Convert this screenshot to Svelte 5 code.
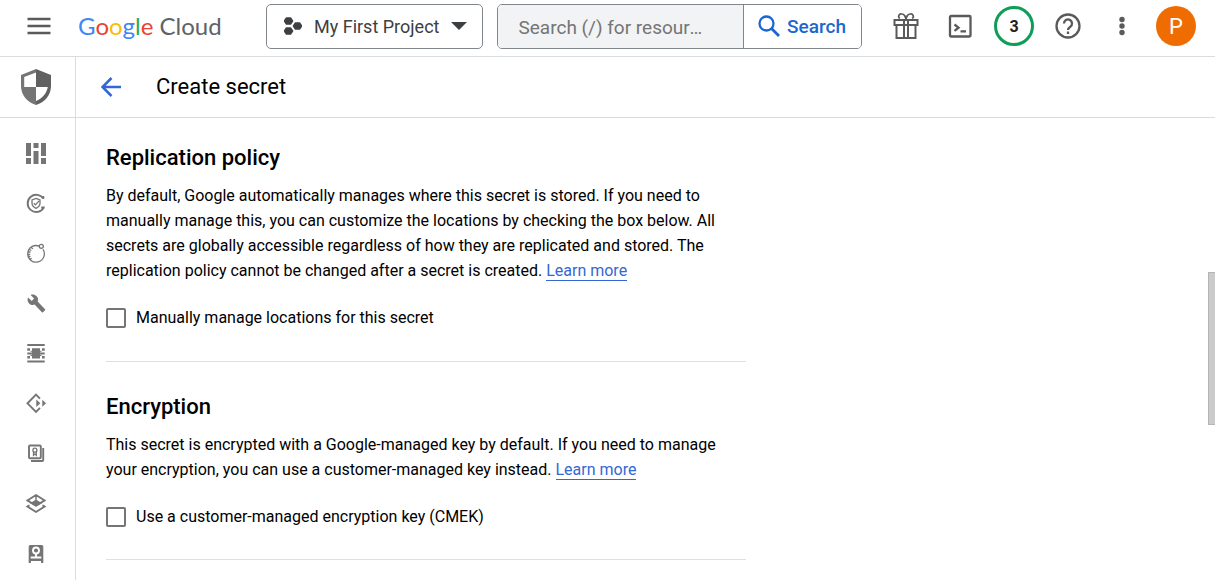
<script lang="ts">
  interface NavItem {
    label: string;
    fill?: string;
    line?: string;
    thin?: string;
    knockout?: string;
  }

  const navItems: NavItem[] = [
    {
      label: 'Risk overview',
      fill: 'M2 2h5v13H2zM2 17h5v6H2zM9.500 2h5v5h-5zM9.500 10h5v13h-5zM17 2h5v13h-5zM17 17h5v6h-5z',
    },
    {
      label: 'Compliance',
      line: 'M19.300 7.400A8.600 8.600 0 1 0 19.400 17.200M19.300 8V5M17.200 16.500h3.500',
      thin: 'M12 7.400l4 1.600v3c0 2.500-1.600 4.300-4 5.300-2.400-1-4-2.800-4-5.300V9zM9.800 12.200l1.700 1.700 3.500-4',
    },
    {
      label: 'Zero Trust',
      thin: 'M15.500 5.300A8.300 8.300 0 1 0 19 8.300M19.300 5.300a2 2 0 1 1-4 0 2 2 0 0 1 4 0zM7 6.500l2 1.200M5.300 8.500l2 1M4 11h2.500M3.700 13.500h2.500M4.500 16l2-.6M6 18.500l1.600-1.300',
    },
    {
      label: 'Detection tools',
      fill: 'M21 18.200l-7.300-7.600c.7-2 .3-4.100-1.200-5.600-1.600-1.600-4-2-5.900-1.100l3.500 3.600-2.400 2.400-3.600-3.400c-1 1.900-.6 4.300 1 5.900 1.500 1.500 3.700 1.900 5.500 1.200l7.300 7.600c.3.3.8.3 1.100 0l2-2c.4-.3.4-.8 0-1z',
    },
    {
      label: 'Network protection',
      fill: 'M3.300 3h17.400v2H3.300zM3.300 19.500h17.400v2H3.300zM8 7.300h8v10.200H8zM3.300 11.400h17.400v2H3.300zM3.300 7.300H6v2.400H3.300zM18 7.300h2.700v2.400H18zM3.300 15.100H6v2.400H3.300zM18 15.100h2.700v2.400H18zM6.500 9.700h11v1H6.500zM6.500 14.100h11v1h-11z',
    },
    {
      label: 'Web Security',
      fill: 'M12.300 8.500l4 3.800-4 3.800zM18.300 8.800l3.700 3.500-3.700 3.500z',
      line: 'M16 7.700L12 3.700l-8.500 8.600 8.500 8.600 4-4',
    },
    {
      label: 'Certificates',
      line: 'M6 4.500h9.800a1 1 0 0 1 1 1v10.700a1 1 0 0 1-1 1H6a1 1 0 0 1-1-1V5.500a1 1 0 0 1 1-1zM19.200 7V19a1 1 0 0 1-1 1H7',
      thin: 'M12.900 9.200a2 2 0 1 1-4 0 2 2 0 0 1 4 0zM9.500 11v3.300l1.400-1.200 1.400 1.200V11',
    },
    {
      label: 'Policy layers',
      fill: 'M11.300 4h1.400v5l5.300 3.200-6 3.300-6-3.300L11.300 9z',
      line: 'M12 4l8.600 5.400-8.600 5.300-8.600-5.300zM5.500 14.300l-2.100 1.300L12 21l8.600-5.400-2.100-1.300',
    },
    {
      label: 'Key vault',
      fill: 'M6.200 4h11.600a1.500 1.500 0 0 1 1.500 1.500V22h-2.200v-2H6.900v2H4.700V5.500A1.500 1.500 0 0 1 6.200 4z',
      knockout: 'M15 9.500a3 3 0 1 1-6 0 3 3 0 0 1 6 0zM12 12.500v3.700M6.700 16.500h10.600',
    },
  ];

  let query = $state('');
  let manualLocations = $state(false);
  let useCmek = $state(false);
</script>

<header class="topbar">
  <button type="button" class="icon-btn menu" aria-label="Navigation menu">
    <svg width="24" height="24" viewBox="0 0 24 24" fill="none" stroke="currentColor" stroke-width="2.400">
      <path d="M.5 5h23M.5 12h23M.5 19h23" />
    </svg>
  </button>

  <a href="#home" class="logo"><span class="blue">G</span><span class="red">o</span><span class="yellow">o</span><span class="blue">g</span><span class="green">l</span><span class="red">e</span> Cloud</a>

  <button type="button" class="project">
    <svg width="18" height="20" viewBox="0 0 18 20" fill="currentColor">
      <path d="M2.500 2h4l2 3-2 3h-4l-2-3zM11.500 7h4l2 3-2 3h-4l-2-3zM2.500 12h4l2 3-2 3h-4l-2-3z" stroke="currentColor" stroke-width="1.600" stroke-linejoin="round" />
    </svg>
    <span>My First Project</span>
    <svg width="16" height="8" viewBox="0 0 16 8" fill="currentColor">
      <path d="M0 0h16L8 8z" />
    </svg>
  </button>

  <form class="search" onsubmit={(e) => e.preventDefault()}>
    <input
      type="text"
      bind:value={query}
      placeholder="Search (/) for resources, docs, products, and more"
      aria-label="Search"
    />
    <button type="submit">
      <svg width="24" height="24" viewBox="0 0 24 24" fill="none" stroke="currentColor" stroke-width="2.300">
        <circle cx="9.500" cy="9.500" r="7" />
        <path d="M14.500 14.500l7.500 7.500" stroke-width="2.800" />
      </svg>
      Search
    </button>
  </form>

  <div class="tools">
    <button type="button" class="icon-btn" aria-label="Free trial">
      <svg width="28" height="28" viewBox="0 0 28 28" fill="none" stroke="currentColor" stroke-width="2">
        <path d="M2.500 8h23v5h-23zM4.500 13h19v13h-19zM12 8v18M16 8v18" />
        <path d="M14 7c-1-3.500-2.500-5-4.200-5a2.500 2.500 0 0 0-2 4.500M14 7c1-3.500 2.500-5 4.200-5a2.500 2.500 0 0 1 2 4.500M11.500 2.500L14 5l2.500-2.500" stroke-width="1.700" />
      </svg>
    </button>
    <button type="button" class="icon-btn" aria-label="Activate Cloud Shell">
      <svg width="24" height="24" viewBox="0 0 24 24" fill="none" stroke="currentColor" stroke-width="2.300">
        <rect x="2" y="2" width="20.500" height="20.500" rx="1" />
        <path d="M6.500 10.500l4 3.200-4 3.200M12.500 17.300h5.500" />
      </svg>
    </button>
    <button type="button" class="badge" aria-label="3 notifications">3</button>
    <button type="button" class="icon-btn" aria-label="Help">
      <svg width="26" height="26" viewBox="0 0 26 26" fill="none" stroke="currentColor" stroke-width="2.300">
        <circle cx="13" cy="13" r="11.500" />
        <path d="M9 10.500a4 4 0 1 1 6.300 3.200c-1.500 1.100-2.300 1.700-2.300 3.300M13 18.500v2.500" />
      </svg>
    </button>
    <button type="button" class="icon-btn" aria-label="More options">
      <svg width="24" height="24" viewBox="0 0 24 24" fill="currentColor">
        <circle cx="12" cy="5.500" r="2.700" />
        <circle cx="12" cy="12" r="2.700" />
        <circle cx="12" cy="18.500" r="2.700" />
      </svg>
    </button>
    <button type="button" class="avatar" aria-label="Account">P</button>
  </div>
</header>

<div class="layout">
  <nav class="sidebar" aria-label="Security">
    <a href="#security" class="product" aria-label="Security">
      <svg width="32" height="38" viewBox="0 0 32 38">
        <path fill="#757575" d="M16 1L1 7v11c0 9 6.300 16.500 15 19z" />
        <path fill="#616161" d="M16 1l15 6v11c0 9-6.300 16.500-15 19z" />
        <path fill="#fff" d="M4.200 9L16 4.500V19H4.200zM16 19h11.800c-1.100 6.500-5.800 11.500-11.800 14z" />
      </svg>
    </a>
    <ul>
      {#each navItems as item}
        <li>
          <a href="#nav" aria-label={item.label}>
            <svg width="24" height="24" viewBox="0 0 24 24">
              {#if item.fill}<path class="fill" d={item.fill} />{/if}
              {#if item.line}<path class="line" d={item.line} />{/if}
              {#if item.thin}<path class="thin" d={item.thin} />{/if}
              {#if item.knockout}<path class="knockout" d={item.knockout} />{/if}
            </svg>
          </a>
        </li>
      {/each}
    </ul>
  </nav>

  <main>
    <div class="page-head">
      <a href="#back" class="back" aria-label="Back">
        <svg width="20" height="20" viewBox="0 0 20 20" fill="none" stroke="currentColor" stroke-width="2.500">
          <path d="M20 10H2M10.500 1L1.500 10l9 9" />
        </svg>
      </a>
      <h1>Create secret</h1>
    </div>

    <div class="content">
      <section>
        <h2>Replication policy</h2>
        <p>
          By default, Google automatically manages where this secret is stored. If you need to
          manually manage this, you can customize the locations by checking the box below. All
          secrets are globally accessible regardless of how they are replicated and stored. The
          replication policy cannot be changed after a secret is created.
          <a href="#replication">Learn more</a>
        </p>
        <label>
          <input type="checkbox" bind:checked={manualLocations} />
          Manually manage locations for this secret
        </label>
      </section>

      <section>
        <h2>Encryption</h2>
        <p>
          This secret is encrypted with a Google-managed key by default. If you need to manage
          your encryption, you can use a customer-managed key instead.
          <a href="#encryption">Learn more</a>
        </p>
        <label>
          <input type="checkbox" bind:checked={useCmek} />
          Use a customer-managed encryption key (CMEK)
        </label>
      </section>
    </div>
  </main>
</div>

<div class="scroll-thumb" aria-hidden="true"></div>

<style>
  :global(body) {
    background: #fff;
    color: #000;
    font-family: Roboto, 'Liberation Sans', sans-serif;
    font-size: 16px;
  }

  :global(#app) {
    display: flex;
    flex-direction: column;
    min-height: 100vh;
  }

  button,
  input {
    font-family: inherit;
    margin: 0;
  }

  svg {
    display: block;
    flex: none;
  }

  /* Top bar */
  .topbar {
    display: flex;
    align-items: center;
    box-sizing: border-box;
    height: 57px;
    padding: 0 19px 4px 27px;
    border-bottom: 1px solid #dadce0;
  }

  .icon-btn {
    display: flex;
    align-items: center;
    justify-content: center;
    padding: 0;
    border: none;
    background: none;
    color: #5a5a5a;
    cursor: pointer;
  }

  .logo {
    flex: none;
    width: 188px;
    margin-left: 27px;
    color: #5f6368;
    font-family: Lato, Roboto, sans-serif;
    font-size: 24px;
    line-height: 32px;
    text-decoration: none;
    white-space: nowrap;
  }

  .blue { color: #4285f4; }
  .red { color: #ea4335; }
  .yellow { color: #fbbc04; }
  .green { color: #34a853; }

  .project {
    display: flex;
    flex: none;
    align-items: center;
    gap: 12px;
    box-sizing: border-box;
    height: 45px;
    padding: 0 15px 0 17px;
    border: 1px solid #80868b;
    border-radius: 5px;
    background: #fff;
    color: #3c4043;
    font-size: 18px;
    white-space: nowrap;
    cursor: pointer;
  }

  .search {
    display: flex;
    flex: 1;
    box-sizing: border-box;
    min-width: 0;
    height: 45px;
    margin-left: 14px;
    border: 1px solid #80868b;
    border-radius: 5px;
    overflow: hidden;
  }

  .search input {
    flex: 1;
    min-width: 0;
    padding: 2px 40px 0 20px;
    border: none;
    background: #f1f3f4;
    color: #3c4043;
    font-size: 19px;
    text-overflow: ellipsis;
  }

  .search input::placeholder {
    color: #757575;
    opacity: 1;
  }

  .search button {
    display: flex;
    align-items: center;
    gap: 6px;
    padding: 0 15px 0 13px;
    border: none;
    border-left: 1px solid #80868b;
    background: #fff;
    color: #1967d2;
    font-size: 19px;
    font-weight: 500;
    cursor: pointer;
  }

  .tools {
    display: grid;
    flex: none;
    grid-template-columns: repeat(6, 40px);
    gap: 14px;
    margin-left: 24px;
  }

  .badge,
  .avatar {
    box-sizing: border-box;
    width: 40px;
    height: 40px;
    padding: 0;
    border-radius: 50%;
    cursor: pointer;
  }

  .badge {
    border: 3px solid #0f9d58;
    background: #fff;
    color: #212121;
    font-size: 16px;
    font-weight: 700;
  }

  .avatar {
    border: none;
    background: #ef6c00;
    color: #fff;
    font-size: 22px;
  }

  /* Side navigation */
  .layout {
    display: flex;
    flex: 1;
  }

  .sidebar {
    flex: none;
    width: 75px;
    border-right: 1px solid #dadce0;
  }

  .product,
  .sidebar li a {
    display: flex;
    align-items: center;
    justify-content: center;
    padding-right: 3px;
  }

  .product {
    height: 60px;
    border-bottom: 1px solid #dadce0;
  }

  .sidebar ul {
    margin: 0;
    padding: 10px 0 0;
    list-style: none;
  }

  .sidebar li a {
    height: 50px;
  }

  .fill {
    fill: #757575;
  }

  .line,
  .thin,
  .knockout {
    fill: none;
    stroke: #757575;
    stroke-width: 1.9;
  }

  .thin {
    stroke-width: 1.3;
  }

  .knockout {
    stroke: #fff;
  }

  /* Page */
  main {
    flex: 1;
    min-width: 0;
  }

  .page-head {
    display: flex;
    align-items: center;
    gap: 35px;
    height: 60px;
    padding-left: 25px;
    border-bottom: 1px solid #dadce0;
  }

  .back {
    color: #3367d6;
  }

  h1,
  h2 {
    margin: 0;
    font-size: 22px;
    line-height: 28px;
  }

  h1 {
    font-weight: 400;
  }

  h2 {
    font-weight: 500;
  }

  .content {
    max-width: 640px;
    padding: 26px 30px 0;
  }

  section {
    padding-bottom: 33px;
    border-bottom: 1px solid #e0e0e0;
  }

  section + section {
    padding-top: 31px;
    padding-bottom: 32px;
  }

  p {
    margin: 11px 0 25px;
    line-height: 25px;
  }

  p a {
    border-bottom: 1px solid #3367d6;
    color: #3367d6;
    text-decoration: none;
  }

  label {
    display: flex;
    align-items: center;
    gap: 10px;
    line-height: 20px;
  }

  input[type='checkbox'] {
    appearance: none;
    flex: none;
    width: 20px;
    height: 20px;
    border: 2px solid #757575;
    border-radius: 2px;
    background: #fff;
  }

  input[type='checkbox']:checked {
    border-color: #3367d6;
    background: #3367d6;
  }

  .scroll-thumb {
    position: fixed;
    top: 272px;
    right: 0;
    box-sizing: border-box;
    width: 7px;
    height: 153px;
    border: 1px solid #b5b5b5;
    border-right: none;
    background: #cbcbcb;
  }
</style>
